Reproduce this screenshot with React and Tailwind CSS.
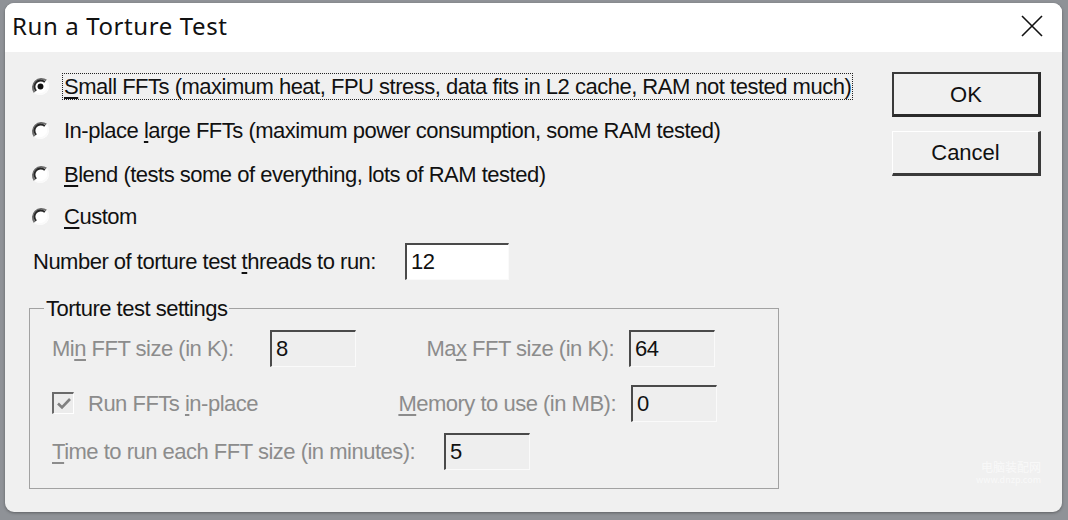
import React from "react";

const font = { fontFamily: '"Liberation Sans", Arial, sans-serif' };

function Radio({ checked }) {
  return (
    <svg width="19" height="19" viewBox="0 0 18 18" className="shrink-0">
      <circle cx="9" cy="9" r="8" fill="#ffffff" />
      <path d="M14.6 3.4 A8 8 0 0 0 3.4 14.6" fill="none" stroke="#6e6e6e" strokeWidth="1.8" />
      <path d="M13.1 4.9 A5.8 5.8 0 0 0 4.9 13.1" fill="none" stroke="#262626" strokeWidth="1.7" />
      <path d="M3.4 14.6 A8 8 0 0 0 14.6 3.4" fill="none" stroke="#fafafa" strokeWidth="1.6" />
      {checked && <circle cx="9" cy="9" r="2.8" fill="#111" />}
    </svg>
  );
}

function Field({ value, enabled, className }) {
  return (
    <div
      className={
        "h-[37px] border-t-2 border-l-2 border-r border-b border-t-[#4a4a4a] border-l-[#4a4a4a] border-r-[#fafafa] border-b-[#fafafa] flex items-center pl-[4px] text-[22px] text-[#111] " +
        (enabled ? "bg-white " : "bg-[#eeeeee] ") +
        className
      }
    >
      {value}
    </div>
  );
}

export default function App() {
  return (
    <div className="w-[1068px] h-[520px] bg-[#8f9297] pt-[3px] pl-[5px] overflow-hidden" style={font}>
      <div className="w-[1057px] h-[509px] rounded-[9px] overflow-hidden flex flex-col bg-[#f0f0f0] shadow-[0_1px_3px_rgba(0,0,0,0.35)]">
        {/* title bar */}
        <div className="h-[49px] bg-white flex items-center justify-between pl-[7px] pr-[19px] pb-[3px] shrink-0">
          <span
            className="text-[24px] text-[#111] tracking-[0.6px]"
            style={{ fontFamily: '"Noto Sans", "Open Sans", sans-serif' }}
          >
            Run a Torture Test
          </span>
          <svg width="22" height="22" viewBox="0 0 22 22">
            <path d="M1 1 L21 21 M21 1 L1 21" stroke="#111" strokeWidth="1.6" />
          </svg>
        </div>

        {/* body */}
        <div className="flex flex-1 text-[22px] text-[#111] tracking-[-0.5px] whitespace-nowrap">
          <div className="flex flex-col pl-[26px] pt-[12px] w-[870px]">
            <div className="h-[44px] flex items-center gap-[13px]">
              <Radio checked />
              <span className="outline-1 outline-dotted outline-[#222] px-[1px] leading-[25px]">
                <u className="underline-offset-[3px]">S</u>mall FFTs (maximum heat, FPU stress, data fits in L2 cache, RAM not tested much)
              </span>
            </div>
            <div className="h-[45px] flex items-center gap-[14px]">
              <Radio />
              <span>
                In-place <u className="underline-offset-[3px]">l</u>arge FFTs (maximum power consumption, some RAM tested)
              </span>
            </div>
            <div className="h-[43px] flex items-center gap-[14px]">
              <Radio />
              <span>
                <u className="underline-offset-[3px]">B</u>lend (tests some of everything, lots of RAM tested)
              </span>
            </div>
            <div className="h-[40px] flex items-center gap-[14px]">
              <Radio />
              <span>
                <u className="underline-offset-[3px]">C</u>ustom
              </span>
            </div>
            <div className="h-[50px] flex items-center">
              <span className="w-[374px] pl-[2px]">
                Number of torture test <u className="underline-offset-[3px]">t</u>hreads to run:
              </span>
              <Field value="12" enabled className="w-[104px]" />
            </div>

            <fieldset className="mt-[6px] w-[750px] h-[197px] border border-[#a2a2a2] px-[22px] ml-[-2px]">
              <legend className="px-[2px] ml-[-8px] text-[#111]">Torture test settings</legend>
              <div className="text-[#8c8c8c] flex flex-col">
                <div className="h-[44px] mt-[1px] flex items-center">
                  <span className="w-[218px]">
                    Mi<u className="underline-offset-[3px]">n</u> FFT size (in K):
                  </span>
                  <Field value="8" className="w-[86px]" />
                  <span className="w-[273px] text-right pr-[15px]">
                    Ma<u className="underline-offset-[3px]">x</u> FFT size (in K):
                  </span>
                  <Field value="64" className="w-[86px]" />
                </div>
                <div className="h-[44px] mt-[11px] flex items-center">
                  <div className="w-[304px] flex items-center gap-[14px]">
                    <div className="w-[22px] h-[22px] border-t-2 border-l-2 border-r border-b border-t-[#6a6a6a] border-l-[#6a6a6a] border-r-white border-b-white bg-[#ececec] flex items-center justify-center">
                      <svg width="16" height="16" viewBox="0 0 16 16">
                        <path d="M2 7.5 L6 11.5 L14 3" fill="none" stroke="#808080" strokeWidth="2.6" />
                      </svg>
                    </div>
                    <span>
                      Run FFTs <u className="underline-offset-[3px]">i</u>n-place
                    </span>
                  </div>
                  <span className="w-[275px] text-right pr-[15px]">
                    <u className="underline-offset-[3px]">M</u>emory to use (in MB):
                  </span>
                  <Field value="0" className="w-[86px]" />
                </div>
                <div className="h-[44px] mt-[4px] flex items-center">
                  <span className="w-[392px]">
                    <u className="underline-offset-[3px]">T</u>ime to run each FFT size (in minutes):
                  </span>
                  <Field value="5" className="w-[86px]" />
                </div>
              </div>
            </fieldset>
          </div>

          {/* buttons */}
          <div className="flex flex-col gap-[14px] pt-[20px] pl-[17px] tracking-normal">
            <button className="w-[149px] h-[45px] bg-[#f0f0f0] border-t-2 border-l-2 border-r-[3px] border-b-[3px] border-t-[#3a3a3a] border-l-[#3a3a3a] border-r-[#2a2a2a] border-b-[#2a2a2a] text-[22px] text-[#111]">
              OK
            </button>
            <button className="w-[149px] h-[45px] bg-[#f0f0f0] border-t border-l border-r-[3px] border-b-[3px] border-t-white border-l-white border-r-[#3a3a3a] border-b-[#3a3a3a] text-[22px] text-[#111]">
              Cancel
            </button>
            <div className="mt-[270px] ml-[80px] text-[12px] leading-[13px] text-white/60 text-right" style={{ fontFamily: '"Noto Sans CJK SC", sans-serif' }}>
              电脑装配网
              <div className="text-[9px]">www.dnzp.com</div>
            </div>
          </div>
        </div>
      </div>
    </div>
  );
}
